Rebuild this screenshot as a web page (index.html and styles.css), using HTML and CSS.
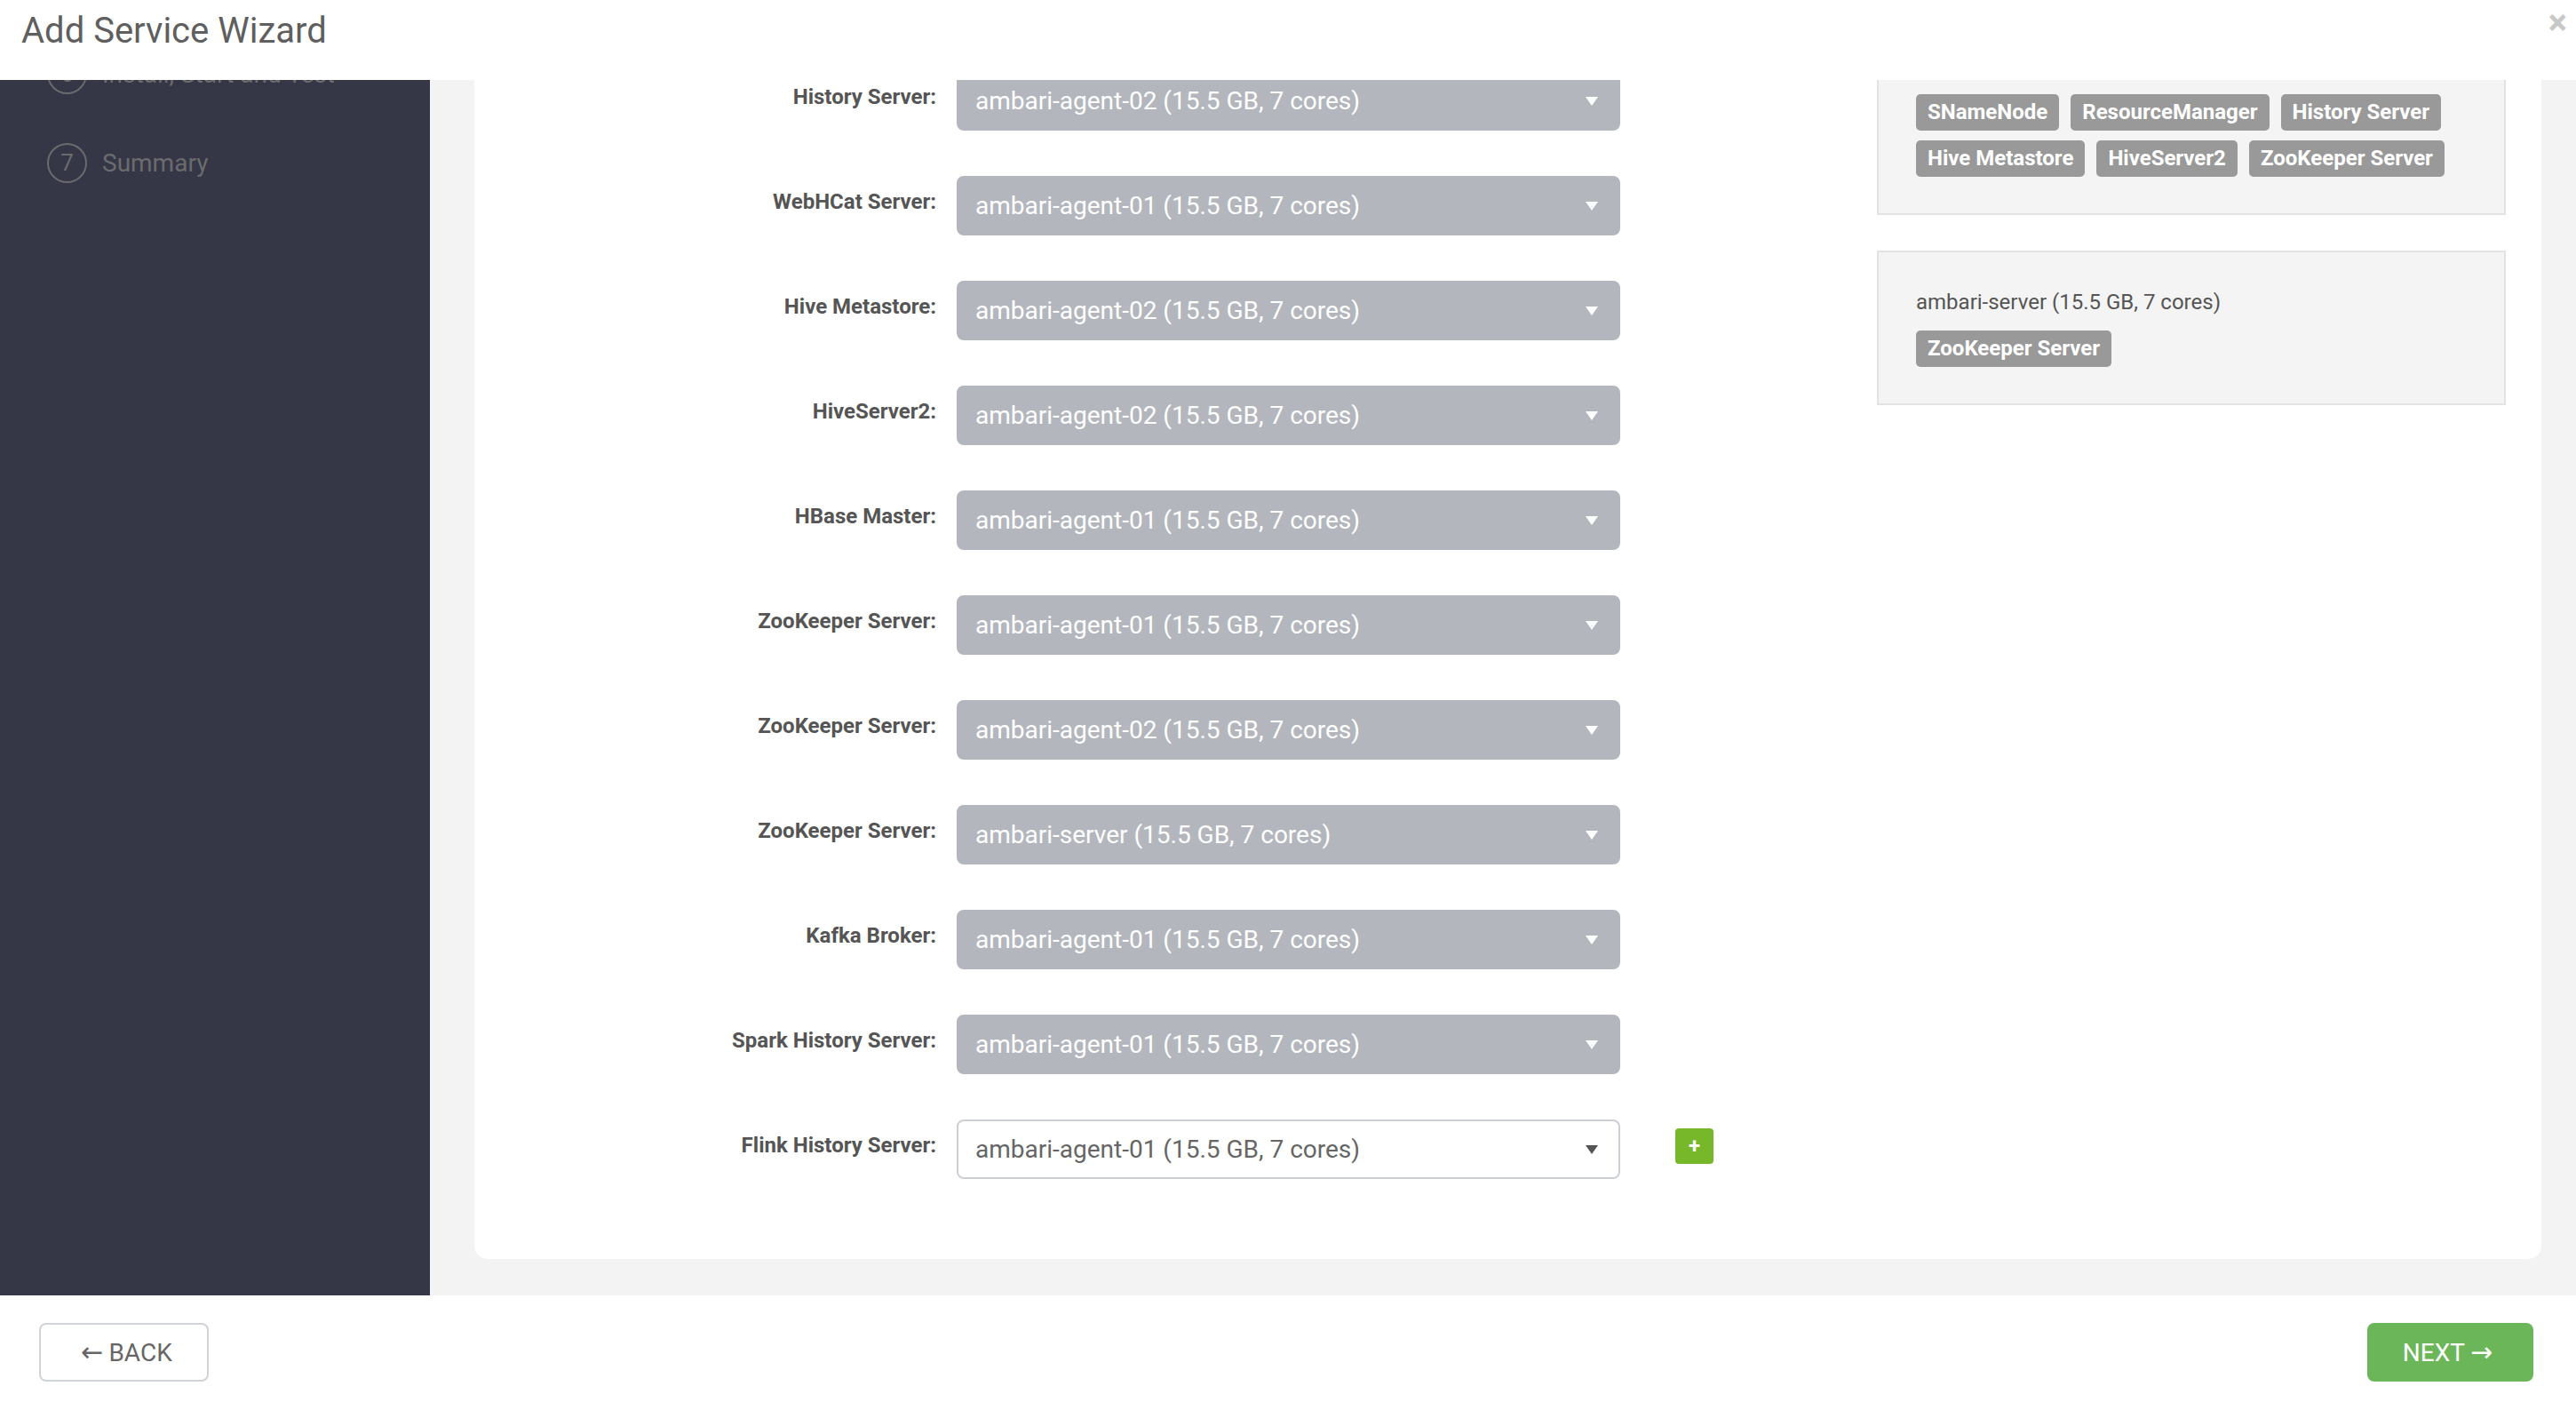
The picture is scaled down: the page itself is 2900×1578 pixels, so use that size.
FILE: index.html
```html
<!DOCTYPE html>
<html lang="en">
<head>
    <meta charset="UTF-8">
    <title>Add Service Wizard</title>
    <link rel="stylesheet" href="styles.css">
</head>
<body>
    <header class="modal-header">
        <h1>Add Service Wizard</h1>
        <span class="close">&times;</span>
    </header>

    <div class="modal-body">
        <aside class="steps">
            <ol class="step-list">
                <li class="step"><span class="step-num">1</span>Choose Services</li>
                <li class="step active"><span class="step-num">2</span>Assign Masters</li>
                <li class="step"><span class="step-num">3</span>Assign Slaves and Clients</li>
                <li class="step"><span class="step-num">4</span>Customize Services</li>
                <li class="step"><span class="step-num">5</span>Review</li>
                <li class="step"><span class="step-num">6</span>Install, Start and Test</li>
                <li class="step"><span class="step-num">7</span>Summary</li>
            </ol>
        </aside>

        <section class="content">
            <div class="content-inner">
                <div class="card">
                    <div class="assign-form">
                        <div class="form-row">
                            <label>NameNode:</label>
                            <div class="host-select disabled">ambari-agent-01 (15.5 GB, 7 cores)<span class="caret"></span></div>
                        </div>
                        <div class="form-row">
                            <label>SNameNode:</label>
                            <div class="host-select disabled">ambari-agent-02 (15.5 GB, 7 cores)<span class="caret"></span></div>
                        </div>
                        <div class="form-row">
                            <label>ResourceManager:</label>
                            <div class="host-select disabled">ambari-agent-02 (15.5 GB, 7 cores)<span class="caret"></span></div>
                        </div>
                        <div class="form-row">
                            <label>Timeline Service V1.5:</label>
                            <div class="host-select disabled">ambari-agent-01 (15.5 GB, 7 cores)<span class="caret"></span></div>
                        </div>
                        <div class="form-row">
                            <label>History Server:</label>
                            <div class="host-select disabled">ambari-agent-02 (15.5 GB, 7 cores)<span class="caret"></span></div>
                        </div>
                        <div class="form-row">
                            <label>WebHCat Server:</label>
                            <div class="host-select disabled">ambari-agent-01 (15.5 GB, 7 cores)<span class="caret"></span></div>
                        </div>
                        <div class="form-row">
                            <label>Hive Metastore:</label>
                            <div class="host-select disabled">ambari-agent-02 (15.5 GB, 7 cores)<span class="caret"></span></div>
                        </div>
                        <div class="form-row">
                            <label>HiveServer2:</label>
                            <div class="host-select disabled">ambari-agent-02 (15.5 GB, 7 cores)<span class="caret"></span></div>
                        </div>
                        <div class="form-row">
                            <label>HBase Master:</label>
                            <div class="host-select disabled">ambari-agent-01 (15.5 GB, 7 cores)<span class="caret"></span></div>
                        </div>
                        <div class="form-row">
                            <label>ZooKeeper Server:</label>
                            <div class="host-select disabled">ambari-agent-01 (15.5 GB, 7 cores)<span class="caret"></span></div>
                        </div>
                        <div class="form-row">
                            <label>ZooKeeper Server:</label>
                            <div class="host-select disabled">ambari-agent-02 (15.5 GB, 7 cores)<span class="caret"></span></div>
                        </div>
                        <div class="form-row">
                            <label>ZooKeeper Server:</label>
                            <div class="host-select disabled">ambari-server (15.5 GB, 7 cores)<span class="caret"></span></div>
                        </div>
                        <div class="form-row">
                            <label>Kafka Broker:</label>
                            <div class="host-select disabled">ambari-agent-01 (15.5 GB, 7 cores)<span class="caret"></span></div>
                        </div>
                        <div class="form-row">
                            <label>Spark History Server:</label>
                            <div class="host-select disabled">ambari-agent-01 (15.5 GB, 7 cores)<span class="caret"></span></div>
                        </div>
                        <div class="form-row">
                            <label>Flink History Server:</label>
                            <div class="host-select">ambari-agent-01 (15.5 GB, 7 cores)<span class="caret"></span></div>
                            <button class="add-btn">+</button>
                        </div>
                    </div>

                    <div class="host-panels">
                        <div class="host-panel">
                            <div class="host-name">ambari-agent-01 (15.5 GB, 7 cores)</div>
                            <div class="tags">
                                <span class="tag">NameNode</span>
                                <span class="tag">Timeline Service V1.5</span>
                                <span class="tag">WebHCat Server</span>
                                <span class="tag">HBase Master</span>
                                <span class="tag">ZooKeeper Server</span>
                                <span class="tag">Kafka Broker</span>
                            </div>
                        </div>
                        <div class="host-panel">
                            <div class="host-name">ambari-agent-02 (15.5 GB, 7 cores)</div>
                            <div class="tags">
                                <span class="tag">SNameNode</span>
                                <span class="tag">ResourceManager</span>
                                <span class="tag">History Server</span>
                                <span class="tag">Hive Metastore</span>
                                <span class="tag">HiveServer2</span>
                                <span class="tag">ZooKeeper Server</span>
                            </div>
                        </div>
                        <div class="host-panel">
                            <div class="host-name">ambari-server (15.5 GB, 7 cores)</div>
                            <div class="tags">
                                <span class="tag">ZooKeeper Server</span>
                            </div>
                        </div>
                    </div>
                </div>
            </div>
        </section>
    </div>

    <footer class="modal-footer">
        <button class="btn btn-back"><span class="arrow">&larr;</span>BACK</button>
        <button class="btn btn-next">NEXT<span class="arrow">&rarr;</span></button>
    </footer>
</body>
</html>
```

FILE: styles.css
```css
* {
    box-sizing: border-box;
}

body {
    margin: 0;
    height: 1578px;
    overflow: hidden;
    font-family: 'Roboto', 'Liberation Sans', sans-serif;
    background: #ffffff;
    color: #555;
}

/* header */
.modal-header {
    height: 90px;
    padding: 11px 24px;
    background: #ffffff;
    display: flex;
    justify-content: space-between;
    align-items: flex-start;
    position: relative;
    z-index: 2;
}

.modal-header h1 {
    margin: 0;
    font-size: 40px;
    font-weight: 400;
    color: #5f5f5f;
}

.close {
    font-size: 40px;
    font-weight: 700;
    line-height: 30px;
    color: #c8c8c8;
    margin-right: -14px;
}

/* body: sidebar + scrolled content */
.modal-body {
    height: 1368px;
    display: flex;
    overflow: hidden;
}

.steps {
    width: 484px;
    flex-shrink: 0;
    background: #353646;
    overflow: hidden;
}

/* list is scrolled so only the last steps show */
.step-list {
    list-style: none;
    margin: -557px 0 0;
    padding: 0;
}

.step {
    height: 100px;
    padding-left: 53px;
    display: flex;
    align-items: center;
    font-size: 28px;
    color: #6b6b6e;
}

.step-num {
    width: 45px;
    height: 45px;
    border: 2px solid #6b6b6e;
    border-radius: 50%;
    display: flex;
    align-items: center;
    justify-content: center;
    margin-right: 17px;
    font-size: 26px;
}

.step.active {
    color: #ffffff;
}

.content {
    flex: 1;
    background: #f3f3f3;
    overflow: hidden;
    padding: 0 39px 0 50px;
}

.content-inner {
    margin-top: -562px;
    padding-top: 40px;
}

.card {
    background: #ffffff;
    border-radius: 15px;
    padding: 40px 40px 90px;
    display: flex;
    align-items: flex-start;
}

/* master assignment rows */
.assign-form {
    display: flex;
    flex-direction: column;
    gap: 51px;
}

.form-row {
    display: flex;
    align-items: flex-start;
}

.form-row label {
    width: 480px;
    margin-right: 23px;
    padding-top: 15px;
    text-align: right;
    font-size: 24px;
    font-weight: 700;
    line-height: 29px;
    color: #555;
}

.host-select {
    width: 747px;
    height: 67px;
    padding: 0 23px 0 19px;
    border: 2px solid #ccd0d5;
    border-radius: 8px;
    background: #ffffff;
    color: #666;
    font-size: 28px;
    display: flex;
    align-items: center;
    justify-content: space-between;
}

.host-select.disabled {
    background: #b3b7bd;
    border-color: #b3b7bd;
    color: #ffffff;
}

.caret {
    width: 0;
    height: 0;
    border-left: 7px solid transparent;
    border-right: 7px solid transparent;
    border-top: 10px solid #555;
}

.host-select.disabled .caret {
    border-top-color: #ffffff;
}

.add-btn {
    width: 43px;
    height: 40px;
    margin: 10px 0 0 62px;
    padding: 0;
    border: none;
    border-radius: 4px;
    background: #76b82a;
    color: #ffffff;
    font-family: 'Roboto', sans-serif;
    font-size: 24px;
    font-weight: 700;
}

/* host summary panels */
.host-panels {
    width: 708px;
    margin-left: auto;
    margin-top: 90px;
    display: flex;
    flex-direction: column;
    gap: 40px;
}

.host-panel {
    background: #f4f4f4;
    border: 2px solid #e3e3e3;
    padding: 41px 40px 41px 42px;
}

.host-name {
    font-size: 24px;
    line-height: 30px;
    color: #555;
    margin-bottom: 17px;
}

.tags {
    display: flex;
    flex-wrap: wrap;
    gap: 11px 13px;
}

.tag {
    background: #999999;
    color: #ffffff;
    font-size: 24px;
    font-weight: 700;
    line-height: 29px;
    padding: 6px 13px;
    border-radius: 5px;
}

/* footer */
.modal-footer {
    height: 120px;
    padding: 31px 48px 0 44px;
    display: flex;
    justify-content: space-between;
    align-items: flex-start;
}

.btn {
    height: 66px;
    border-radius: 8px;
    font-family: 'Roboto', sans-serif;
    font-size: 28px;
    padding: 0;
    display: flex;
    align-items: center;
    justify-content: center;
}

.btn .arrow {
    font-family: 'DejaVu Sans', sans-serif;
    font-size: 30px;
    line-height: 1;
    margin: 0 6px;
}

.btn-back {
    width: 191px;
    background: #ffffff;
    border: 2px solid #d0d3d8;
    color: #666;
}

.btn-next {
    width: 187px;
    background: #6cb65a;
    border: none;
    color: #ffffff;
}
```
